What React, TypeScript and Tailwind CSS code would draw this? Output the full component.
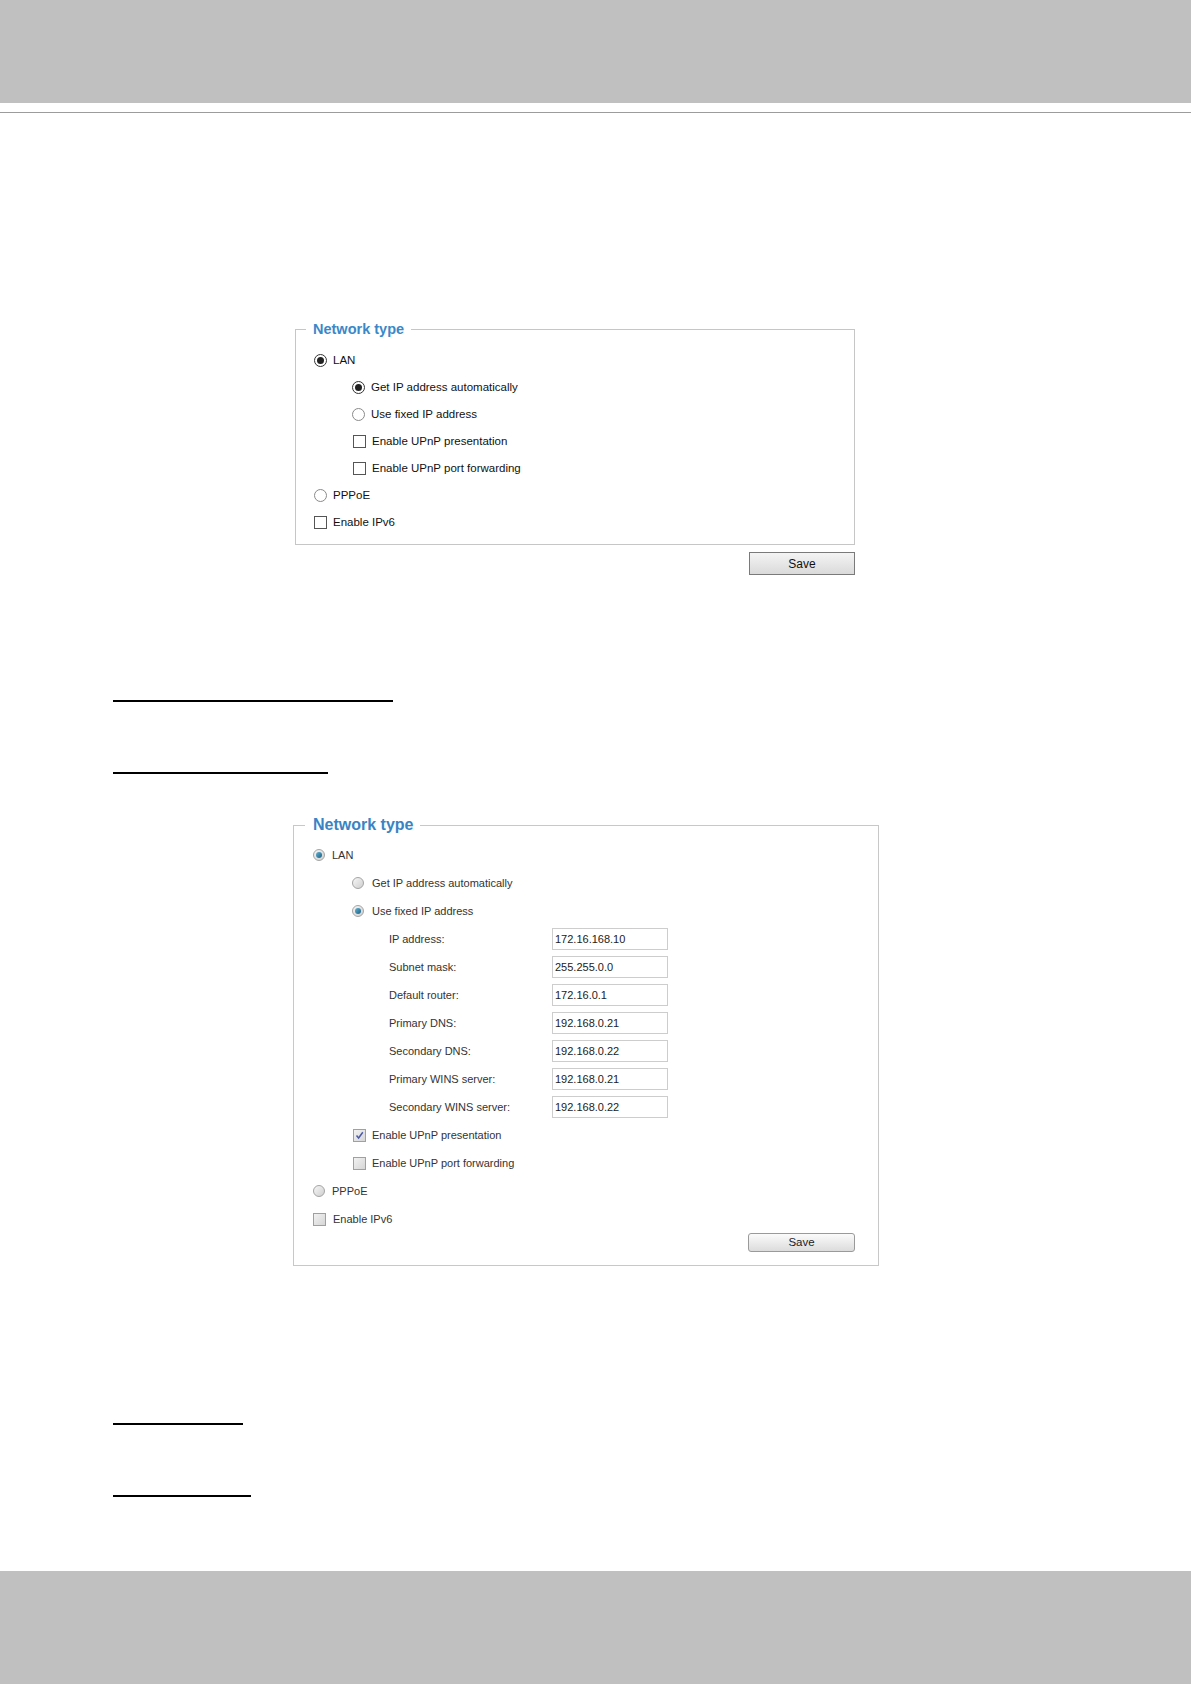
import React from 'react';

type Variant = 'plain' | 'aero';

const Radio = ({ checked, variant }: { checked?: boolean; variant: Variant }) =>
  variant === 'plain' ? (
    <span
      className={`flex h-[13px] w-[13px] shrink-0 items-center justify-center rounded-full border bg-white ${
        checked ? 'border-[#333]' : 'border-[#8a8a8a]'
      }`}
    >
      {checked && <span className="h-[7px] w-[7px] rounded-full bg-[#222]" />}
    </span>
  ) : (
    <span className="flex h-[12px] w-[12px] shrink-0 items-center justify-center rounded-full border border-[#a4a4a4] bg-gradient-to-br from-[#f7f7f7] to-[#cfcfcf]">
      {checked && (
        <span className="h-[6px] w-[6px] rounded-full bg-gradient-to-br from-[#5fb3d6] to-[#1d5f80]" />
      )}
    </span>
  );

const Checkbox = ({ checked, variant }: { checked?: boolean; variant: Variant }) =>
  variant === 'plain' ? (
    <span className="h-[13px] w-[13px] shrink-0 border border-[#555] bg-white" />
  ) : (
    <span className="flex h-[13px] w-[13px] shrink-0 items-center justify-center border border-[#a0a0a0] bg-gradient-to-br from-[#f2f2f2] to-[#d6d6d6]">
      {checked && (
        <svg width="9" height="9" viewBox="0 0 9 9">
          <path d="M1.5 4.5 L3.6 7 L7.8 1.2" fill="none" stroke="#4b5aa6" strokeWidth="1.5" />
        </svg>
      )}
    </span>
  );

const Underline = ({ w, mt }: { w: string; mt: string }) => (
  <div className={`ml-[113px] h-[2px] bg-black ${w} ${mt}`} />
);

const ipFields = [
  ['IP address:', '172.16.168.10'],
  ['Subnet mask:', '255.255.0.0'],
  ['Default router:', '172.16.0.1'],
  ['Primary DNS:', '192.168.0.21'],
  ['Secondary DNS:', '192.168.0.22'],
  ['Primary WINS server:', '192.168.0.21'],
  ['Secondary WINS server:', '192.168.0.22'],
];

const PlainPanel = () => (
  <div className="ml-[295px] mt-[208px] w-[560px]">
    <fieldset className="border border-[#c6c6c6] pb-[8px]">
      <legend className="ml-[10px] pl-[7px] pr-[7px] text-[14.5px] font-bold leading-[16px] text-[#3b88c8]">
        Network type
      </legend>
      <div className="flex flex-col pt-[10px] text-[11.5px] text-[#111]">
        <div className="flex h-[27px] items-center gap-[6px] pl-[18px]">
          <Radio checked variant="plain" />
          <span>LAN</span>
        </div>
        <div className="flex h-[27px] items-center gap-[6px] pl-[56px]">
          <Radio checked variant="plain" />
          <span>Get IP address automatically</span>
        </div>
        <div className="flex h-[27px] items-center gap-[6px] pl-[56px]">
          <Radio variant="plain" />
          <span>Use fixed IP address</span>
        </div>
        <div className="flex h-[27px] items-center gap-[6px] pl-[57px]">
          <Checkbox variant="plain" />
          <span>Enable UPnP presentation</span>
        </div>
        <div className="flex h-[27px] items-center gap-[6px] pl-[57px]">
          <Checkbox variant="plain" />
          <span>Enable UPnP port forwarding</span>
        </div>
        <div className="flex h-[27px] items-center gap-[6px] pl-[18px]">
          <Radio variant="plain" />
          <span>PPPoE</span>
        </div>
        <div className="flex h-[27px] items-center gap-[6px] pl-[18px]">
          <Checkbox variant="plain" />
          <span>Enable IPv6</span>
        </div>
      </div>
    </fieldset>
    <div className="mt-[7px] flex justify-end">
      <button className="h-[23px] w-[106px] border border-[#7a7a7a] bg-gradient-to-b from-[#f4f4f4] to-[#dadada] text-[12px] text-[#111]">
        Save
      </button>
    </div>
  </div>
);

const AeroPanel = () => (
  <fieldset className="ml-[293px] mt-[42px] w-[586px] border border-[#c8c8c8] pb-[13px]">
    <legend className="ml-[11px] pl-[8px] pr-[7px] text-[16px] font-bold leading-[18px] text-[#3884c4]">
      Network type
    </legend>
    <div className="flex flex-col pt-[7px] text-[11px] text-[#333]">
      <div className="flex h-[28px] items-center gap-[7px] pl-[19px]">
        <Radio checked variant="aero" />
        <span>LAN</span>
      </div>
      <div className="flex h-[28px] items-center gap-[8px] pl-[58px]">
        <Radio variant="aero" />
        <span>Get IP address automatically</span>
      </div>
      <div className="flex h-[28px] items-center gap-[8px] pl-[58px]">
        <Radio checked variant="aero" />
        <span>Use fixed IP address</span>
      </div>
      {ipFields.map(([label, value]) => (
        <div key={label} className="flex h-[28px] items-center pl-[95px]">
          <span className="w-[163px]">{label}</span>
          <span className="flex h-[22px] w-[116px] items-center border border-[#cdcdcd] bg-white pl-[2px] text-[#222]">
            {value}
          </span>
        </div>
      ))}
      <div className="flex h-[28px] items-center gap-[6px] pl-[59px]">
        <Checkbox checked variant="aero" />
        <span>Enable UPnP presentation</span>
      </div>
      <div className="flex h-[28px] items-center gap-[6px] pl-[59px]">
        <Checkbox variant="aero" />
        <span>Enable UPnP port forwarding</span>
      </div>
      <div className="flex h-[28px] items-center gap-[7px] pl-[19px]">
        <Radio variant="aero" />
        <span>PPPoE</span>
      </div>
      <div className="flex h-[28px] items-center gap-[7px] pl-[19px]">
        <Checkbox variant="aero" />
        <span>Enable IPv6</span>
      </div>
      <div className="flex justify-end pr-[23px]">
        <button className="h-[19px] w-[107px] rounded-[3px] border border-[#9a9a9a] bg-gradient-to-b from-[#fbfbfb] to-[#dcdcdc] text-[11.5px] text-[#222]">
          Save
        </button>
      </div>
    </div>
  </fieldset>
);

export default function App() {
  return (
    <div className="flex min-h-[1684px] w-[1191px] flex-col bg-white font-['Liberation_Sans',Arial,sans-serif]">
      {/* page header */}
      <div className="h-[103px] bg-[#c0c0c0]" />
      <div className="mt-[9px] h-px bg-[#9c9c9c]" />

      <PlainPanel />

      <Underline w="w-[280px]" mt="mt-[125px]" />
      <Underline w="w-[215px]" mt="mt-[70px]" />

      <AeroPanel />

      <Underline w="w-[130px]" mt="mt-[157px]" />
      <Underline w="w-[138px]" mt="mt-[70px]" />

      {/* page footer */}
      <div className="mt-auto h-[113px] bg-[#c0c0c0]" />
    </div>
  );
}
